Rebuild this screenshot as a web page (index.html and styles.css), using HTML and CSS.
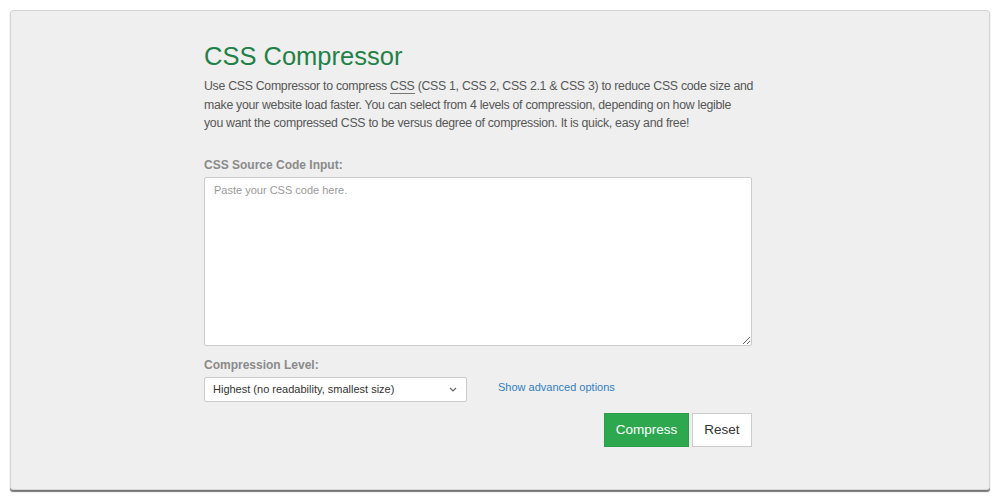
FILE: index.html
```html
<!DOCTYPE html>
<html>
<head>
    <meta name="viewport" content="width=device-width, initial-scale=1.0">
    <title>CSS Compressor</title>
    <link rel="stylesheet" href="styles.css">
</head>
<body>
    <div id="frame">
        <div id="tool">
            <h1>CSS Compressor</h1>
            <p class="intro">Use CSS Compressor to compress <abbr title="Cascading Style Sheets">CSS</abbr> (CSS 1, CSS 2, CSS 2.1 &amp; CSS 3) to reduce CSS code size and<br>
            make your website load faster. You can select from 4 levels of compression, depending on how legible<br>
            you want the compressed CSS to be versus degree of compression. It is quick, easy and free!</p>

            <label class="field-label" for="source">CSS Source Code Input:</label>
            <textarea id="source" placeholder="Paste your CSS code here."></textarea>

            <label class="field-label" for="level">Compression Level:</label>
            <div class="level-row">
                <select id="level">
                    <option>Highest (no readability, smallest size)</option>
                    <option>High (moderate readability, smaller size)</option>
                    <option>Standard (balance between readability and size)</option>
                    <option>Low (higher readability)</option>
                </select>
                <a href="#" class="advanced">Show advanced options</a>
            </div>

            <div class="actions">
                <button class="compress">Compress</button>
                <button class="reset">Reset</button>
            </div>
        </div>
    </div>
</body>
</html>
```

FILE: styles.css
```css
html, body {
    margin: 0;
    background: #fff;
}

body {
    padding: 10px;
    font-family: "Liberation Sans", Arial, sans-serif;
}

#frame {
    height: 478px;
    background: #efefef;
    border: 1px solid #d4d4d4;
    border-radius: 3px;
    box-shadow: 0 2px 1px #777;
}

#tool {
    width: 548px;
    margin-left: 193px;
    padding-top: 27px;
}

h1 {
    margin: 0 0 3px;
    font-size: 25.5px;
    font-weight: normal;
    line-height: 36px;
    color: #1f8147;
}

.intro {
    margin: 0 0 25px;
    font-size: 12.3px;
    letter-spacing: -0.28px;
    line-height: 18.5px;
    color: #575757;
    white-space: nowrap;
}

.intro abbr {
    text-decoration: none;
    border-bottom: 1px solid #777;
}

.field-label {
    display: block;
    margin-bottom: 5px;
    font-size: 12px;
    font-weight: bold;
    color: #8a8a8a;
}

textarea {
    display: block;
    box-sizing: border-box;
    width: 548px;
    height: 169px;
    margin: 0 0 12px;
    padding: 6px 9px;
    border: 1px solid #ccc;
    border-radius: 2px;
    background: #fff;
    font-family: "Liberation Sans", Arial, sans-serif;
    font-size: 11px;
    resize: vertical;
}

textarea::placeholder {
    color: #9a9a9a;
}

.level-row {
    display: flex;
    align-items: center;
}

select {
    box-sizing: border-box;
    width: 263px;
    height: 25px;
    padding: 0 8px;
    border: 1px solid #ccc;
    border-radius: 2px;
    background: #fff url("data:image/svg+xml,%3Csvg xmlns='http://www.w3.org/2000/svg' width='8' height='5' viewBox='0 0 8 5'%3E%3Cpath d='M1 1l3 3 3-3' fill='none' stroke='%23666' stroke-width='1.2'/%3E%3C/svg%3E") no-repeat right 9px center;
    -webkit-appearance: none;
    appearance: none;
    font-family: "Liberation Sans", Arial, sans-serif;
    font-size: 11px;
    color: #333;
}

.advanced {
    margin: 0 0 4px 31px;
    font-size: 11px;
    color: #2f7ec1;
    text-decoration: none;
}

.actions {
    display: flex;
    justify-content: flex-end;
    gap: 3px;
    margin-top: 11px;
}

.actions button {
    height: 34px;
    font-family: "Liberation Sans", Arial, sans-serif;
    font-size: 13.5px;
    border-radius: 0;
    cursor: pointer;
}

.compress {
    width: 85px;
    border: 1px solid #2a9d48;
    background: #2ea84f;
    color: #fff;
}

.reset {
    width: 60px;
    border: 1px solid #ccc;
    background: #fff;
    color: #333;
}
```
